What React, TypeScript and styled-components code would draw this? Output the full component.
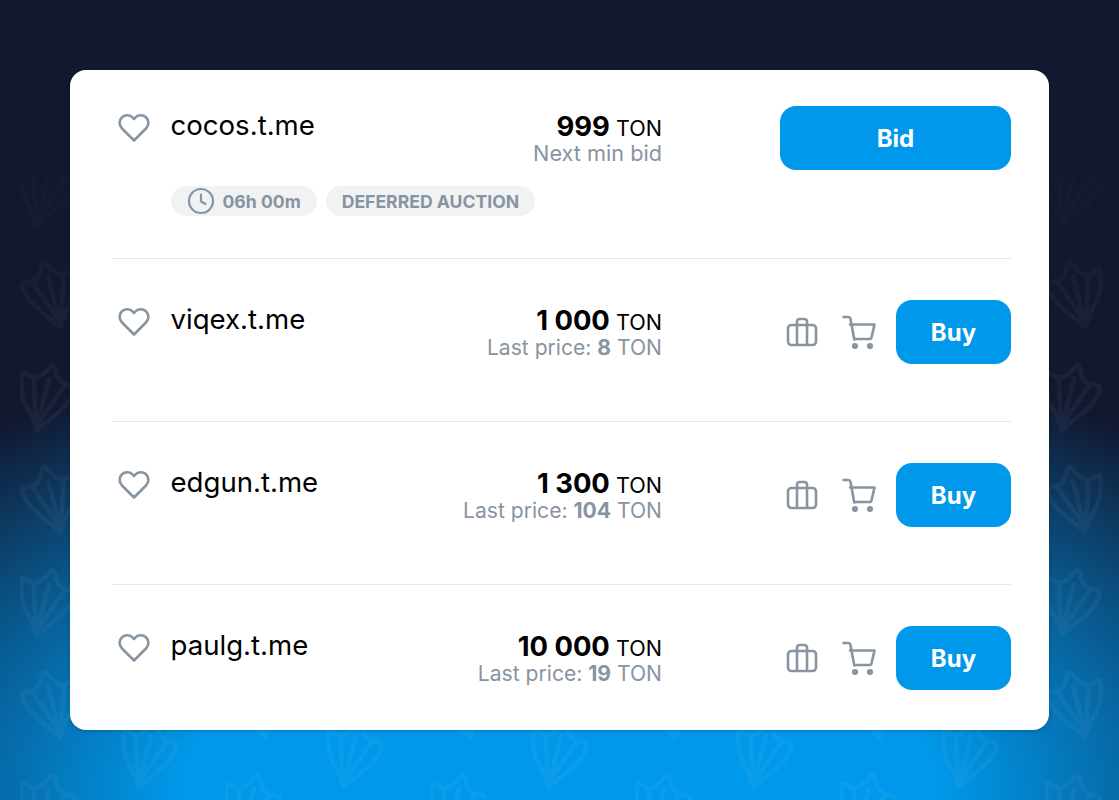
import styled, { createGlobalStyle } from "styled-components";

const GlobalStyle = createGlobalStyle`
  html, body {
    margin: 0;
    padding: 0;
  }
  body {
    font-family: Inter, "Liberation Sans", sans-serif;
  }
`;

const Page = styled.div`
  position: relative;
  box-sizing: border-box;
  height: 800px;
  padding: 70px;
  overflow: hidden;
  background:
    radial-gradient(ellipse 900px 475px at 50% 100%, #0098ea 42%, rgba(0, 152, 234, 0) 100%),
    #111830;
`;

const Pattern = styled.svg`
  position: absolute;
  top: 0;
  left: 0;
  width: 100%;
  height: 100%;
  mask-image: linear-gradient(to bottom, transparent 15%, #000 45%);
`;

const Card = styled.div`
  position: relative;
  box-sizing: border-box;
  height: 660px;
  padding: 36px 38px 0 42px;
  background: #fff;
  border-radius: 16px;
  box-shadow: 0 1px 4px rgba(0, 0, 0, 0.2);
`;

const Row = styled.div<{ $first?: boolean; $last?: boolean }>`
  display: grid;
  grid-template-columns: 58.5px 1fr auto 349px;
  grid-template-rows: 64px auto;
  row-gap: 16px;
  box-sizing: border-box;
  height: ${(p) => (p.$first ? 153 : p.$last ? 104 : 163)}px;
  padding-top: ${(p) => (p.$first ? 0 : 41)}px;
  border-bottom: ${(p) => (p.$last ? "none" : "1px solid #e4e6e9")};
`;

const HeartBox = styled.div`
  padding: 7px 0 0 6px;
  color: #8794a1;
`;

const Name = styled.div`
  font-size: 27.6px;
  line-height: 38px;
  color: #000;
`;

const PriceBox = styled.div`
  padding-top: 5px;
  text-align: right;
  white-space: nowrap;
`;

const Price = styled.div`
  font-size: 21.6px;
  line-height: 30px;
  color: #000;
`;

const Amount = styled.b`
  font-size: 27.4px;
  font-weight: 700;
  line-height: 30px;
`;

const Sub = styled.div`
  font-size: 21.1px;
  line-height: 22px;
  color: #8794a1;
`;

const NextBid = styled(Sub)`
  margin-top: -1px;
  font-size: 21.7px;
`;

const SubBold = styled.b`
  font-weight: 700;
`;

const Actions = styled.div`
  display: flex;
  justify-content: flex-end;
  align-items: center;
  color: #8794a1;
`;

const IconButton = styled.div<{ $gap: number }>`
  display: flex;
  margin-right: ${(p) => p.$gap}px;
`;

const ActionButton = styled.button<{ $wide?: boolean }>`
  width: ${(p) => (p.$wide ? 231 : 115)}px;
  height: 64px;
  padding: 0;
  border: none;
  border-radius: 16px;
  background: #0098ea;
  color: #fff;
  font-family: inherit;
  font-size: 24px;
  font-weight: 700;
`;

const Tags = styled.div`
  grid-column: 2 / 5;
  display: flex;
  gap: 9px;
`;

const Tag = styled.div`
  display: flex;
  align-items: center;
  gap: 8px;
  height: 30px;
  padding: 0 16px;
  border-radius: 15px;
  background: #f1f2f4;
  color: #8794a1;
  font-size: 17.6px;
  font-weight: 700;
  white-space: nowrap;
`;

const FOOT =
  "M40 68 C30 58 10 47 4 32 C1 27 2 24 6 23 C12 23 18 20 20 14 C22 8 22 3 25 3 C29 7 34 15 42 16 C48 16 52 10 55 11 C58 30 52 44 46 52 C44 58 42 63 40 68 Z M39 62 C32 50 22 38 13 24 M39 62 C36 48 32 32 28 17 M40 62 C42 48 43 32 43 17";

const HeartIcon = () => (
  <svg width="32" height="30" viewBox="0 0 32 30" fill="none" stroke="currentColor" strokeWidth="2.6" strokeLinejoin="round">
    <path d="M16 27.5 L4 15.5 C0.8 12.2 0.8 7.2 4 4.2 C7.2 1.4 12 1.6 15 4.8 L16 6 L17 4.8 C20 1.6 24.8 1.4 28 4.2 C31.2 7.2 31.2 12.2 28 15.5 Z" />
  </svg>
);

const ClockIcon = () => (
  <svg width="28" height="28" viewBox="0 0 28 28" fill="none" stroke="currentColor" strokeWidth="2.2" strokeLinecap="round" strokeLinejoin="round">
    <circle cx="14" cy="14" r="12" />
    <path d="M14 7.5V14.5L18.5 17" />
  </svg>
);

const BagIcon = () => (
  <svg width="32" height="32" viewBox="0 0 32 32" fill="none" stroke="currentColor" strokeWidth="2.6" strokeLinejoin="round">
    <rect x="2" y="9" width="28" height="20" rx="3.5" />
    <path d="M11 29V5.5a2.5 2.5 0 0 1 2.5-2.5h5a2.5 2.5 0 0 1 2.5 2.5V29" />
  </svg>
);

const CartIcon = () => (
  <svg width="34" height="34" viewBox="0 0 34 34" fill="none" stroke="currentColor" strokeWidth="2.6" strokeLinecap="round" strokeLinejoin="round">
    <path d="M1.5 2H6.5C7.5 2 8.2 2.6 8.4 3.6L12.3 24.5" />
    <path d="M8 9.5H32.5L29.5 22.5C29.3 23.4 28.6 24 27.7 24H12.3" />
    <circle cx="13" cy="31" r="1.8" fill="currentColor" />
    <circle cx="28" cy="31" r="1.8" fill="currentColor" />
  </svg>
);

const listings = [
  { name: "viqex.t.me", amount: "1 000", last: "8" },
  { name: "edgun.t.me", amount: "1 300", last: "104" },
  { name: "paulg.t.me", amount: "10 000", last: "19" },
];

const App = () => {
  return (
    <Page>
      <GlobalStyle />
      <Pattern>
        <defs>
          <pattern id="feet" x="20" y="54" width="205" height="205" patternUnits="userSpaceOnUse">
            <g fill="none" stroke="#fff" strokeOpacity="0.045" strokeWidth="4.6" strokeLinejoin="round" strokeLinecap="round">
              <path d={FOOT} />
              <path d={FOOT} transform="translate(57 103) scale(-1 1)" />
              <path d={FOOT} transform="translate(102 -52)" />
              <path d={FOOT} transform="translate(102 153)" />
              <path d={FOOT} transform="translate(159 50) scale(-1 1)" />
            </g>
          </pattern>
        </defs>
        <rect width="100%" height="100%" fill="url(#feet)" />
      </Pattern>
      <Card>
        <Row $first>
          <HeartBox>
            <HeartIcon />
          </HeartBox>
          <Name>cocos.t.me</Name>
          <PriceBox>
            <Price>
              <Amount>999</Amount> TON
            </Price>
            <NextBid>Next min bid</NextBid>
          </PriceBox>
          <Actions>
            <ActionButton $wide>Bid</ActionButton>
          </Actions>
          <Tags>
            <Tag>
              <ClockIcon />
              06h 00m
            </Tag>
            <Tag>DEFERRED AUCTION</Tag>
          </Tags>
        </Row>
        {listings.map((item, i) => (
          <Row key={item.name} $last={i === listings.length - 1}>
            <HeartBox>
              <HeartIcon />
            </HeartBox>
            <Name>{item.name}</Name>
            <PriceBox>
              <Price>
                <Amount>{item.amount}</Amount> TON
              </Price>
              <Sub>
                Last price: <SubBold>{item.last}</SubBold> TON
              </Sub>
            </PriceBox>
            <Actions>
              <IconButton $gap={24}>
                <BagIcon />
              </IconButton>
              <IconButton $gap={20}>
                <CartIcon />
              </IconButton>
              <ActionButton>Buy</ActionButton>
            </Actions>
          </Row>
        ))}
      </Card>
    </Page>
  );
};

export default App;
